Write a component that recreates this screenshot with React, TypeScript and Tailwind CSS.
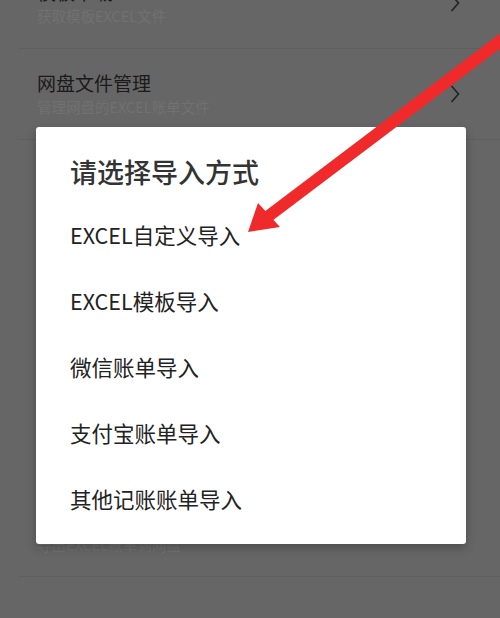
const rows = [
  { title: '模板下载', sub: '获取模板EXCEL文件', h: 'h-[90px]', divider: true },
  { title: '网盘文件管理', sub: '管理网盘的EXCEL账单文件', h: 'h-[90px]', divider: true },
  { title: '导出账单', sub: '导出EXCEL账单文件', h: 'h-[115px]', divider: false },
  { title: '备份账单', sub: '备份账单数据到本地', h: 'h-[115px]', divider: false },
  { title: '恢复账单', sub: '从本地恢复账单数据', h: 'h-[115px]', divider: false },
  { title: '网盘备份', sub: '导出EXCEL账单到网盘', h: 'h-[88px]', divider: true },
];

const options = [
  'EXCEL自定义导入',
  'EXCEL模板导入',
  '微信账单导入',
  '支付宝账单导入',
  '其他记账账单导入',
];

function Chevron() {
  return (
    <svg width="10" height="18" viewBox="0 0 10 18" fill="none">
      <polyline points="1.5,1 8.5,9 1.5,17" stroke="#222222" strokeWidth="1.6" />
    </svg>
  );
}

export default function App() {
  return (
    <div
      className="relative w-[500px] h-[618px] overflow-hidden bg-[#666666]"
      style={{ fontFamily: '"Noto Sans CJK SC", "Noto Sans", sans-serif' }}
    >
      {/* page under the dimmed overlay */}
      <div className="-mt-[42px]">
        {rows.map((row, i) => (
          <div
            key={i}
            className={row.divider ? 'ml-[18px] border-b border-[#5f5f5f]' : 'ml-[18px] border-b border-transparent'}
          >
            <div className={`${row.h} pl-[19px] pr-[40px] flex items-center justify-between`}>
              <div>
                <p className="text-[19px] leading-[24px] text-[#1a1a1a]">{row.title}</p>
                <p className="text-[14.5px] leading-[20px] mt-[2px] text-[#717171]">{row.sub}</p>
              </div>
              <Chevron />
            </div>
          </div>
        ))}
        <div className="h-[90px] mt-[12px] pl-[37px] flex items-center">
          <p className="text-[19px] leading-[24px] text-[#1a1a1a]">关于</p>
        </div>
      </div>

      {/* dialog */}
      <div className="absolute left-[36px] top-[127px] w-[430px] h-[417px] bg-white rounded-[3px] shadow-[0_4px_10px_rgba(0,0,0,0.25)] pl-[34px] pt-[27px]">
        <h2 className="text-[27px] leading-[36px] font-medium text-[#333333]">请选择导入方式</h2>
        <div className="mt-[12px]">
          {options.map((opt) => (
            <div key={opt} className="h-[66px] flex items-center text-[21.5px] text-[#222222]">
              {opt}
            </div>
          ))}
        </div>
      </div>

      {/* red annotation arrow */}
      <svg
        className="absolute inset-0 pointer-events-none"
        width="500"
        height="618"
        viewBox="0 0 500 618"
      >
        <line x1="520" y1="26" x2="266" y2="218" stroke="#f02a2a" strokeWidth="12" />
        <polygon points="248,232 258,203 280,227" fill="#f02a2a" />
      </svg>
    </div>
  );
}
